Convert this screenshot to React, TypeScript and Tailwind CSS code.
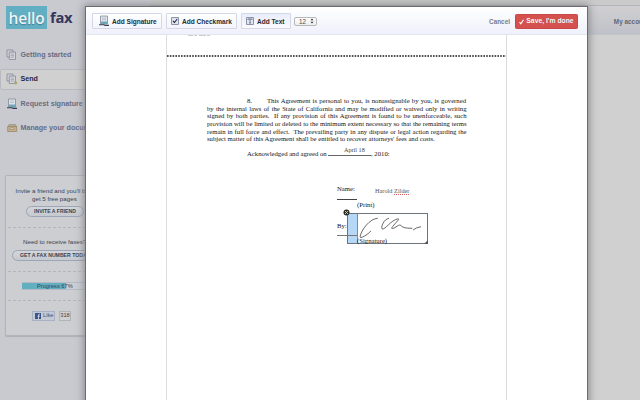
import type { ReactNode } from "react";

const SignIcon = () => (
  <svg width="12" height="12" viewBox="0 0 12 12" className="shrink-0">
    <path d="M2.500 1h7v8h-7z" fill="#dfe5ec" stroke="#84899a" strokeWidth=".8" />
    <path d="M4 3h4M4 4.600h4" stroke="#a3abb8" strokeWidth=".6" />
    <path d="M3 6.500h6.500V9H3z" fill="#6fa5b8" />
    <path d="M1 9.800h5l1 .6h4" stroke="#343e50" strokeWidth="1.100" fill="none" />
  </svg>
);

const PagesIcon = ({ dot = false }: { dot?: boolean }) => (
  <svg width="12" height="12" viewBox="0 0 12 12" className="shrink-0">
    <path d="M1 1h6v7H1z" fill="#cfd1d8" stroke="#858998" strokeWidth=".8" />
    <path d="M3.300 3h6.200v7.500H3.300z" fill="#d5d7dc" stroke="#858998" strokeWidth=".8" />
    <path d="M4.700 5h3.400M4.700 6.600h3.400M4.700 8.200h3.400" stroke="#9498a6" strokeWidth=".7" />
    {dot && <circle cx="9.700" cy="9.800" r="1.600" fill="#a9a66b" />}
  </svg>
);

const BoxIcon = () => (
  <svg width="12" height="12" viewBox="0 0 12 12" className="shrink-0">
    <path d="M2 5l1-2.500h6.500L10.500 5z" fill="#b5aa9f" stroke="#958777" strokeWidth=".6" />
    <path d="M1.700 4.500h9v5h-9z" fill="#c4b08f" stroke="#94815f" strokeWidth=".7" />
    <path d="M4 6h4v1.500H4z" fill="#e3ddd2" stroke="#8b7458" strokeWidth=".5" />
  </svg>
);

const navItems: { label: string; icon: ReactNode; active?: boolean }[] = [
  { label: "Getting started", icon: <PagesIcon /> },
  { label: "Send", icon: <PagesIcon dot />, active: true },
  { label: "Request signature", icon: <SignIcon /> },
  { label: "Manage your documents", icon: <BoxIcon /> },
];

function Sidebar() {
  return (
    <aside className="h-full w-[150px] shrink-0 bg-[#c9cad0]">
      <div className="flex h-[36px] items-start pl-[6px] pt-[6px] font-['Open_Sans',sans-serif] text-[15.500px] leading-[22px]">
        <span className="flex h-[23px] w-[41px] items-center justify-center bg-[#62aec2] font-semibold tracking-[-0.2px] text-[#edf3f5] [text-shadow:0_1px_1px_#467c90]">
          hello
        </span>
        <span className="pl-[3px] text-[14.800px] font-bold tracking-[-0.3px] text-[#35365c]">fax</span>
      </div>
      <nav className="flex flex-col gap-[3.500px] pt-[8px]">
        {navItems.map((item) => (
          <div
            key={item.label}
            className={
              item.active
                ? "flex h-[21px] items-center gap-[3px] rounded-[2px] border border-[#b9bac1] bg-[#d0d0d0] pl-[4.500px] text-[#22264c]"
                : "flex h-[21px] items-center gap-[3px] pl-[5.500px] text-[#686c83]"
            }
          >
            {item.icon}
            <span className="whitespace-nowrap pt-[1px] text-[7.150px] font-bold">{item.label}</span>
          </div>
        ))}
      </nav>
      <section className="ml-[5px] mt-[36px] h-[161px] w-[114px] rounded-[2px] border border-[#b2b4bb] bg-[#cdced1] text-[6.200px] text-[#3c4250] shadow-[0_1px_1px_#aeb0b6]">
        <div className="whitespace-nowrap pt-[11px] leading-[8px]">
          <p className="pl-[9.500px]">Invite a friend and you'll both</p>
          <p className="pl-[26px]">get 5 free pages</p>
        </div>
        <div className="ml-[20px] mt-[3px] flex h-[11px] w-[58px] items-center justify-center rounded-full border border-[#9ca6b7] bg-linear-to-b from-[#d4d6da] to-[#c5c9d0] pt-[1px] text-[5.150px] font-bold">
          INVITE A FRIEND
        </div>
        <div className="mx-[2px] mt-[10px] border-t border-dashed border-[#b2b5bb]" />
        <p className="ml-[17px] mt-[9px] whitespace-nowrap leading-[10px]">Need to receive faxes?</p>
        <div className="ml-[6px] mt-[3px] flex h-[11px] w-[88px] items-center whitespace-nowrap rounded-full border border-[#9ca6b7] bg-linear-to-b from-[#d4d6da] to-[#c5c9d0] pl-[7px] pt-[1px] text-[5.150px] font-bold">
          GET A FAX NUMBER TODAY
        </div>
        <div className="mx-[2px] mt-[10px] border-t border-dashed border-[#b2b5bb]" />
        <div className="ml-[16px] mt-[10px] flex h-[8px] w-[64px] items-center border-y border-[#b5bac3] bg-linear-to-r from-[#61b0c2] from-[68%] to-[#cbced5] to-[68%] pl-[15px] pt-[1px] text-[5.700px]">
          Progress 67%
        </div>
        <div className="mx-[2px] mt-[10px] border-t border-dashed border-[#b2b5bb]" />
        <div className="ml-[26px] mt-[10px] flex h-[10px] items-center gap-[4px] text-[5.700px]">
          <div className="flex h-[10px] w-[23px] items-center gap-[2px] border border-[#a9b2c5] bg-[#c3c9d5] pl-[2px] text-[#3c5280]">
            <svg width="6" height="6" viewBox="0 0 6 6" className="shrink-0">
              <path d="M0 0h6v6H0z" fill="#3c5488" />
              <path d="M5 1.300H4.200q-.7 0-.7.800V6M2.500 3.200H5" stroke="#dce2ec" strokeWidth=".8" fill="none" />
            </svg>
            Like
          </div>
          <div className="flex h-[10px] w-[12px] items-center justify-center border border-[#b3b4b8] bg-[#d0d0d0]">318</div>
        </div>
      </section>
    </aside>
  );
}

const paragraph = [
  "by the internal laws of the State of California and may be modified or waived only in writing",
  "signed by both parties.\u00a0 If any provision of this Agreement is found to be unenforceable, such",
  "provision will be limited or deleted to the minimum extent necessary so that the remaining terms",
  "remain in full force and effect.\u00a0 The prevailing party in any dispute or legal action regarding the",
];

function Toolbar() {
  return (
    <header className="flex h-[28px] shrink-0 items-center border-b border-[#e2e4ee] bg-linear-to-b from-white to-[#eff1fb] pl-[6px] text-[6.550px] font-bold text-[#252a36]">
      <button className="flex h-[16px] w-[70px] items-center gap-[2px] rounded-[1px] border border-[#d3d7e6] bg-linear-to-b from-white to-[#f3f5fc] pl-[5px]">
        <SignIcon />
        <span className="whitespace-nowrap pt-[2px]">Add Signature</span>
      </button>
      <button className="ml-[4px] flex h-[16px] w-[71px] items-center gap-[3px] rounded-[1px] border border-[#d3d7e6] bg-linear-to-b from-white to-[#f3f5fc] pl-[4px]">
        <svg width="8" height="8" viewBox="0 0 8 8" className="shrink-0">
          <path d="M.5.500h7v7h-7z" fill="#e1e5f1" stroke="#8b92ab" />
          <path d="M2 4l1.500 1.500L6.200 2" fill="none" stroke="#24283a" strokeWidth="1.100" />
        </svg>
        <span className="whitespace-nowrap pt-[2px]">Add Checkmark</span>
      </button>
      <button className="ml-[4px] flex h-[16px] w-[50px] items-center gap-[3px] rounded-[1px] border border-[#d3d7e6] bg-linear-to-b from-[#e9edfa] to-[#fafbff] pl-[4px]">
        <svg width="8" height="8" viewBox="0 0 8 8" className="shrink-0">
          <path d="M.5.500h7v7h-7z" fill="#e1e5f1" stroke="#8b92ab" />
          <path d="M2 3V2h4v1M4 2v4M3 6h2" fill="none" stroke="#52586f" strokeWidth=".7" />
        </svg>
        <span className="whitespace-nowrap pt-[2px]">Add Text</span>
      </button>
      <button className="ml-[3px] mt-[1px] flex h-[9px] w-[23px] items-center justify-between rounded-[2px] border border-[#b8b8b8] bg-linear-to-b from-white to-[#ededed] pl-[4px] pr-[2px] text-[6.300px] font-normal text-[#4c4c4c]">
        <span className="pt-[1px]">12</span>
        <svg width="4" height="6" viewBox="0 0 4 6">
          <path d="M.500 2.300L2 .500l1.500 1.800zM.500 3.700h3L2 5.500z" fill="#333" />
        </svg>
      </button>
      <span className="ml-auto pt-[2px] text-[6.400px] text-[#777b8b]">Cancel</span>
      <button className="ml-[5px] mr-[9px] mt-[2px] flex h-[15px] w-[63px] items-center justify-center gap-[2px] rounded-[1.500px] border border-[#c94744] bg-[#d4514e] text-[6.800px] text-white [text-shadow:0_-0.500px_0_#9b302e]">
        <svg width="5" height="6" viewBox="0 0 5 6" className="shrink-0">
          <path d="M.5 3.200l1.300 1.700L4.500.700" fill="none" stroke="#fff" strokeWidth="1.100" />
        </svg>
        <span className="whitespace-nowrap">Save, I'm done</span>
      </button>
    </header>
  );
}

function Document() {
  return (
    <main className="ml-[80px] h-[365px] w-[341px] overflow-hidden border-x border-[#dcdcdc] bg-white font-['Liberation_Serif',serif] text-[6.700px] leading-[7.680px] text-[#151515]">
      <svg width="24" height="2" className="ml-[20px] block">
        <path d="M1 .3h22" stroke="#a6a6a6" strokeWidth=".7" strokeDasharray="5 1 3 2 7 1" />
      </svg>
      <svg width="340" height="2" className="mt-[18px] block">
        <path d="M0 1h340" stroke="#161616" strokeWidth="1.300" strokeDasharray="1.600 1.200" />
      </svg>
      <div className="ml-[40px] mt-[40px] w-[259.500px] whitespace-nowrap">
        <div className="flex">
          <span className="w-[60px] shrink-0 pl-[40px]">8.</span>
          <span className="w-[199px] [text-align-last:justify]">
            This Agreement is personal to you, is nonassignable by you, is governed
          </span>
        </div>
        {paragraph.map((line) => (
          <div key={line} className="[text-align-last:justify]">
            {line}
          </div>
        ))}
        <div>subject matter of this Agreement shall be entitled to recover attorneys' fees and costs.</div>
      </div>
      <div className="ml-[80px] mt-[6.500px] flex whitespace-nowrap">
        <span className="w-[81px]">Acknowledged and agreed on</span>
        <span className="mt-[-4px] h-[10px] w-[43px] border-b border-[#666] pl-[16px] text-[6.200px] text-[#444]">April 18</span>
        <span>, 2010:</span>
      </div>
      <div className="ml-[170px] mt-[28px] flex">
        <div className="w-[20px]">
          Name:
          <div className="mt-[6px] border-b border-[#444]" />
        </div>
        <span className="ml-[18px] mt-[2px] text-[6.300px] text-[#555]">
          Harold{" "}
          <span className="underline decoration-[#e06060] decoration-dotted underline-offset-1">Zilder</span>
        </span>
      </div>
      <div className="ml-[190px] mt-[1px]">(Print)</div>
      <div className="relative ml-[170px] mt-[4px] h-[36px]">
        <div className="absolute left-[10px] top-0 h-[31px] w-[81px] border border-[#6c747d]">
          <div className="h-full w-[10px] border-r border-[#718fac] bg-[#b6d7f5]" />
        </div>
        <div className="relative w-[20px] pt-[9px]">
          By:
          <div className="mt-[6px] border-b border-[#777]" />
        </div>
        <div className="relative ml-[20px] mt-[1px]">(Signature)</div>
        <svg width="94" height="36" viewBox="0 0 94 36" className="absolute left-0 top-[-4px]">
          <circle cx="9.500" cy="3.500" r="3" fill="#292923" />
          <path d="M8 2l3 3M11 2L8 5" stroke="#d8d2ab" strokeWidth=".9" />
          <path
            d="M40.700 9.300C33 9.500 24 21 23 28Q23.500 30 30.700 25Q32.500 23 34 22M52 9.300C47 10 43.500 18 45.300 20C48 21 54 11 61 9.800C64 9.500 55 17 54.700 19.300C57 20.500 61 15.500 63.500 16Q65 19.500 75.300 19.300M76 21Q79 18.500 84 17.700"
            fill="none"
            stroke="#444"
            strokeWidth=".8"
          />
          <path d="M91 31v4h-4z" fill="#555" />
        </svg>
      </div>
    </main>
  );
}

export default function App() {
  return (
    <div className="relative flex h-[400px] w-[640px] overflow-hidden bg-[#c9cad0] font-['Liberation_Sans',Arial,sans-serif]">
      <Sidebar />
      <div className="flex min-w-0 flex-1 flex-col bg-[#d0d0d0]">
        <div className="h-[6px] border-b border-[#b3b4ba] bg-[#cacaca]" />
        <div className="flex h-[29px] items-center justify-end whitespace-nowrap border-b border-[#c3c4c9] bg-linear-to-b from-[#d0d0d1] to-[#bfc1c9] text-[6.400px] font-bold text-[#626678]">
          <span className="mr-[-9px] pt-[3px]">My account</span>
        </div>
      </div>
      <div className="absolute left-[86px] top-[7px] flex h-[400px] w-[501px] flex-col bg-white shadow-[0_0_0_1px_#6b6c70,0_0_8px_2px_#85868a]">
        <Toolbar />
        <Document />
      </div>
    </div>
  );
}
